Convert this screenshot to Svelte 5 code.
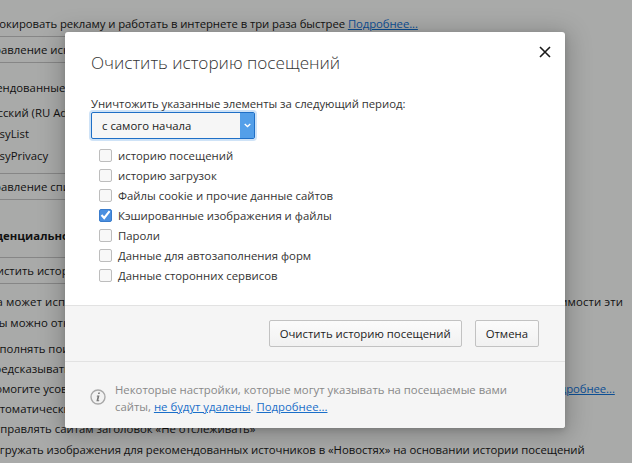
<script>
  const items = [
    ['историю посещений', false],
    ['историю загрузок', false],
    ['Файлы cookie и прочие данные сайтов', false],
    ['Кэшированные изображения и файлы', true],
    ['Пароли', false],
    ['Данные для автозаполнения форм', false],
    ['Данные сторонних сервисов', false]
  ];
</script>

<div class="page">
  <div class="settings">
    <p class="line ad">Блокировать рекламу и работать в интернете в три раза быстрее <a href="#a">Подробнее...</a></p>
    <div class="btn b1">Управление исключениями</div>
    <p class="line l1">Рекомендованные</p>
    <p class="line l2">Русский (RU AdList)</p>
    <p class="line l3">EasyList</p>
    <p class="line l4">EasyPrivacy</p>
    <div class="btn b2">Управление списками</div>
    <p class="line head">Конфиденциальность</p>
    <div class="btn b3">Очистить историю</div>
    <p class="line l5">Opera может использовать веб-службы для повышения удобства работы в этом браузере. При необходимости эти</p>
    <p class="line l6">службы можно отключить</p>
    <p class="line l7">Дополнять поисковые</p>
    <p class="line l8">Предсказывать</p>
    <p class="line l9">Помогите усовершенствовать Opera, автоматически отправляя данные об использовании и о сбоях. <a href="#a">Подробнее...</a></p>
    <p class="line l11">Автоматически</p>
    <p class="line l12">Отправлять сайтам заголовок «Не отслеживать»</p>
    <p class="line l10">Загружать изображения для рекомендованных источников в «Новостях» на основании истории посещений</p>
  </div>

  <div class="overlay">
    <div class="dialog">
      <div class="main">
        <h1>Очистить историю посещений</h1>
        <button class="close" aria-label="Закрыть">
          <svg width="12" height="12" viewBox="0 0 12 12"><path d="M1 1L11 11M11 1L1 11" stroke="#1a1a1a" stroke-width="1.6" fill="none"/></svg>
        </button>
        <div class="caption">Уничтожить указанные элементы за следующий период:</div>
        <div class="select">
          <span class="value">с самого начала</span>
          <span class="arrow">
            <svg width="7" height="5" viewBox="0 0 7 5"><path d="M.7 1L3.5 3.6L6.3 1" stroke="#fff" stroke-width="1.3" fill="none"/></svg>
          </span>
        </div>
        <div class="checks">
          {#each items as [label, on]}
            <div class="check">
              <span class="box" class:on>
                {#if on}
                  <svg width="11" height="10" viewBox="0 0 11 10"><path d="M1.5 5L4.2 8L9.6 1.2" stroke="#fff" stroke-width="2.1" fill="none"/></svg>
                {/if}
              </span>
              <span>{label}</span>
            </div>
          {/each}
        </div>
      </div>
      <div class="actions">
        <button class="action">Очистить историю посещений</button>
        <button class="action">Отмена</button>
      </div>
      <div class="note">
        <svg class="info" width="16" height="16" viewBox="0 0 16 16">
          <circle cx="8" cy="8" r="7" fill="#f2f2f2" stroke="#a9a9a9" stroke-width="1.4"/>
          <path d="M8.3 3.4h1.7l-.4 1.7H8zM7 6.4h2.5L8.3 11.2h1l-.3 1H6.4l1.1-4.8h-.8z" fill="#777"/>
        </svg>
        <p>Некоторые настройки, которые могут указывать на посещаемые вами сайты, <a href="#a">не будут удалены</a>. <a href="#a">Подробнее...</a></p>
      </div>
    </div>
  </div>
</div>

<style>
  :global(body) { margin: 0; }
  .page {
    position: relative;
    width: 632px;
    height: 463px;
    overflow: hidden;
    background: #a9aaa9;
    font: 11.35px/17px "Open Sans", sans-serif;
    color: #111;
  }
  .settings { width: 632px; }
  p { margin: 0; }
  .line { white-space: nowrap; }
  a { color: #0d4f94; }
  .ad { padding-top: 15px; margin-left: -14px; letter-spacing: -0.08px; }
  .btn {
    margin: 4px 0 0 -20px;
    width: 200px;
    height: 27px;
    box-sizing: border-box;
    border-top: 1px solid #868686;
    border-bottom: 1px solid #868686;
    line-height: 26px;
    white-space: nowrap;
  }
  .l1 { margin-top: 16px; margin-left: -38px; }
  .l2 { margin-top: 8px; margin-left: -15px; }
  .l3 { margin-top: 4px; margin-left: -13px; }
  .l4 { margin-top: 5px; margin-left: -13px; }
  .b2 { margin-top: 9px; }
  .head { margin-top: 27px; margin-bottom: 1px; margin-left: -44px; font-weight: 700; }
  .b3 { margin-top: 13px; margin-left: -19px; }
  .l5 { margin-top: 9px; margin-left: -31px; letter-spacing: 0.16px; }
  .l6 { margin-top: 4px; margin-left: -34px; }
  .l7 { margin-top: 9px; margin-left: -15px; }
  .l8 { margin-top: 3px; margin-left: -14px; }
  .l9 { margin-top: 3px; margin-left: -13px; letter-spacing: -0.08px; }
  .l11 { margin-top: 3px; margin-left: -14px; }
  .l12 { margin-top: 3px; margin-left: -14px; }
  .l10 { margin-top: 4px; margin-left: -13px; letter-spacing: -0.05px; }
  .overlay {
    position: absolute;
    inset: 0;
    padding: 32px 0 0 65px;
  }
  .dialog {
    width: 500px;
    height: 396px;
    display: flex;
    flex-direction: column;
    background: #fff;
    border-radius: 3px;
    box-shadow: 0 4px 23px 5px rgba(0,0,0,.2), 0 2px 6px rgba(0,0,0,.15);
    overflow: hidden;
  }
  .main { position: relative; height: 273px; padding: 0 26px; box-sizing: border-box; }
  h1 {
    margin: 0;
    padding-top: 19px;
    font: 300 17.15px/24px "Open Sans", sans-serif;
    color: #333;
  }
  .close {
    position: absolute;
    top: 14px;
    right: 14px;
    padding: 0;
    border: 0;
    background: none;
    width: 12px;
    height: 12px;
  }
  .close svg { display: block; }
  .caption { margin-top: 20px; color: #333; height: 17px; line-height: 17px; letter-spacing: -0.04px; }
  .select {
    width: 164px;
    height: 27px;
    box-sizing: border-box;
    display: flex;
    background: #f6f6f6;
    border: 1px solid #1f6fc6;
    border-radius: 2px;
    box-shadow: 0 0 0 2px #cfe3f7;
  }
  .value { flex: 1; padding-left: 10px; line-height: 25px; color: #222; }
  .arrow { width: 14px; background: #539fe9; display: flex; align-items: center; justify-content: center; }
  .checks { margin-top: 6px; padding-left: 8px; color: #333; }
  .check { display: flex; align-items: center; gap: 6px; height: 20px; }
  .box {
    width: 13px;
    height: 13px;
    box-sizing: border-box;
    border: 1px solid #bdbdbd;
    border-radius: 2px;
    background: #f8f8f8;
    display: flex;
    align-items: center;
    justify-content: center;
  }
  .box.on { background: #4a8fe0; border-color: #3a7ccc; }
  .actions {
    height: 56px;
    box-sizing: border-box;
    display: flex;
    justify-content: flex-end;
    align-items: center;
    gap: 13px;
    padding: 0 26px;
    background: #f5f5f5;
    border-top: 1px solid #e2e2e2;
  }
  .action {
    height: 27px;
    padding: 0 10px;
    box-sizing: border-box;
    font: inherit;
    color: #222;
    background: linear-gradient(#fbfbfb, #f1f1f1);
    border: 1px solid #c2c2c2;
    border-radius: 2px;
  }
  .note {
    flex: 1;
    display: flex;
    gap: 9px;
    padding: 19px 26px 0 25px;
    background: #f5f5f5;
    border-top: 1px solid #e2e2e2;
    color: #888;
  }
  .note a { color: #1a6fc9; }
  .info { margin-top: 8px; flex: none; }
</style>
